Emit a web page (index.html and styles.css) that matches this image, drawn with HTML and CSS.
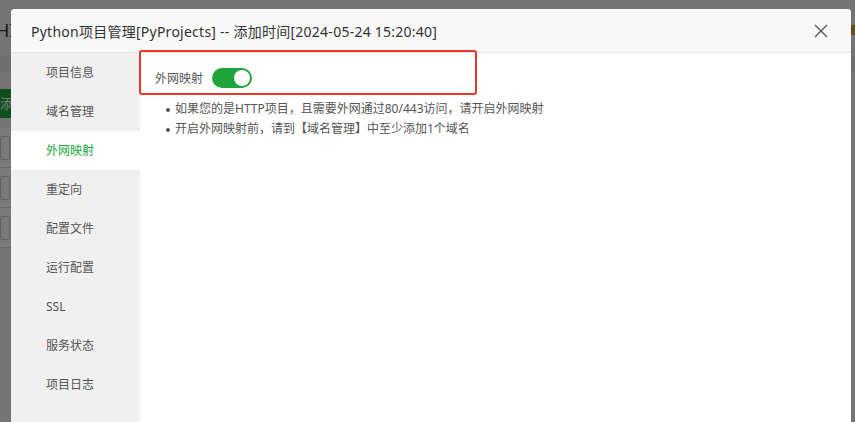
FILE: index.html
```html
<!DOCTYPE html>
<html lang="zh-CN">
<head>
<meta charset="utf-8">
<title>Python项目管理</title>
<link rel="stylesheet" href="styles.css">
</head>
<body>
<div class="page">
  <div class="page-title">HI</div>
  <div class="page-band"></div>
  <div class="page-btn">添加</div>
  <div class="page-rows">
    <div class="page-row"><span class="page-input"></span></div>
    <div class="page-row"><span class="page-input"></span></div>
    <div class="page-row"><span class="page-input"></span></div>
  </div>
  <div class="page-right-mark"></div>
</div>
<div class="overlay"></div>
<div class="modal">
  <div class="modal-header">
    <span class="modal-title">Python项目管理[PyProjects] -- 添加时间[2024-05-24 15:20:40]</span>
    <span class="modal-close">
      <svg width="14" height="14" viewBox="0 0 14 14"><path d="M1 1 L13 13 M13 1 L1 13" stroke="#555" stroke-width="1.3" fill="none"/></svg>
    </span>
  </div>
  <div class="modal-body">
    <ul class="side-nav">
      <li class="nav-item">项目信息</li>
      <li class="nav-item">域名管理</li>
      <li class="nav-item active">外网映射</li>
      <li class="nav-item">重定向</li>
      <li class="nav-item">配置文件</li>
      <li class="nav-item">运行配置</li>
      <li class="nav-item">SSL</li>
      <li class="nav-item">服务状态</li>
      <li class="nav-item">项目日志</li>
    </ul>
    <div class="content">
      <div class="switch-row">
        <span class="switch-label">外网映射</span>
        <span class="switch on"><span class="knob"></span></span>
      </div>
      <ul class="tips">
        <li>如果您的是HTTP项目，且需要外网通过80/443访问，请开启外网映射</li>
        <li>开启外网映射前，请到【域名管理】中至少添加1个域名</li>
      </ul>
    </div>
  </div>
  <div class="highlight"></div>
</div>
</body>
</html>
```
FILE: styles.css
```css
* { box-sizing: border-box; }
html, body { margin: 0; padding: 0; }
body {
  width: 855px;
  height: 422px;
  overflow: hidden;
  position: relative;
  background: #f2f2f2;
  font-family: "Noto Sans", "Noto Sans CJK SC", sans-serif;
}
.page { position: relative; height: 422px; }
.page-title { padding: 18px 0 0 0; font-size: 18px; color: #333; height: 50px; margin-left: -4px; }
.page-band { height: 16px; background: #e6e6e6; margin-top: 6px; }
.page-btn { margin-top: 17px; width: 60px; height: 29px; background: #20a53a; color: #fff; font-size: 13px; line-height: 29px; margin-left: -10px; padding-left: 10px; }
.page-rows { margin-top: 10px; background: #fff; width: 200px; }
.page-row { height: 40px; border-bottom: 1px solid #ddd; padding-top: 8px; }
.page-input { display: block; width: 10px; height: 24px; border: 1px solid #ccc; border-radius: 2px; }
.page-right-mark { position: absolute; right: 0; top: 25px; width: 6px; height: 10px; background: #e0a020; }
.overlay { position: absolute; inset: 0; background: rgba(0,0,0,0.52); }

.modal {
  position: absolute;
  left: 11px;
  top: 9px;
  width: 840px;
  height: 413px;
  background: #fff;
  border-radius: 4px 4px 0 0;
  overflow: hidden;
}
.modal-header {
  height: 44px;
  background: #f8f8f8;
  border-bottom: 1px solid #e6e6e6;
  display: flex;
  align-items: center;
  justify-content: space-between;
  padding: 0 23px 0 20px;
}
.modal-title { font-size: 14px; color: #333; letter-spacing: 0.25px; }
.modal-close { display: flex; width: 14px; height: 14px; }

.modal-body { display: flex; height: 369px; }
.side-nav {
  list-style: none;
  margin: 0;
  padding: 0;
  width: 129px;
  background: #f0f0f0;
}
.nav-item {
  height: 39px;
  line-height: 39px;
  padding-left: 35px;
  font-size: 12px;
  color: #555;
}
.nav-item.active { background: #fff; color: #20a53a; }

.content { flex: 1; padding: 15px 15px; }
.switch-row { display: flex; align-items: center; height: 20px; }
.switch-label { font-size: 12px; color: #555; margin-right: 9px; }
.switch {
  width: 40px;
  height: 20px;
  border-radius: 10px;
  background: #20a53a;
  display: flex;
  align-items: center;
  justify-content: flex-end;
  padding: 2px;
}
.knob { width: 16px; height: 16px; border-radius: 50%; background: #fff; }
.tips { list-style: none; margin: 11px 0 0 0; padding: 0 0 0 10px; }
.tips li { font-size: 12px; color: #555; line-height: 20px; position: relative; padding-left: 10px; }
.tips li::before {
  content: "";
  position: absolute;
  left: 1px;
  top: 9px;
  width: 4px;
  height: 4px;
  border-radius: 50%;
  background: #555;
}
.highlight {
  position: absolute;
  left: 128px;
  top: 41px;
  width: 338px;
  height: 45px;
  border: 2px solid #e8352c;
  border-radius: 3px;
}
```
